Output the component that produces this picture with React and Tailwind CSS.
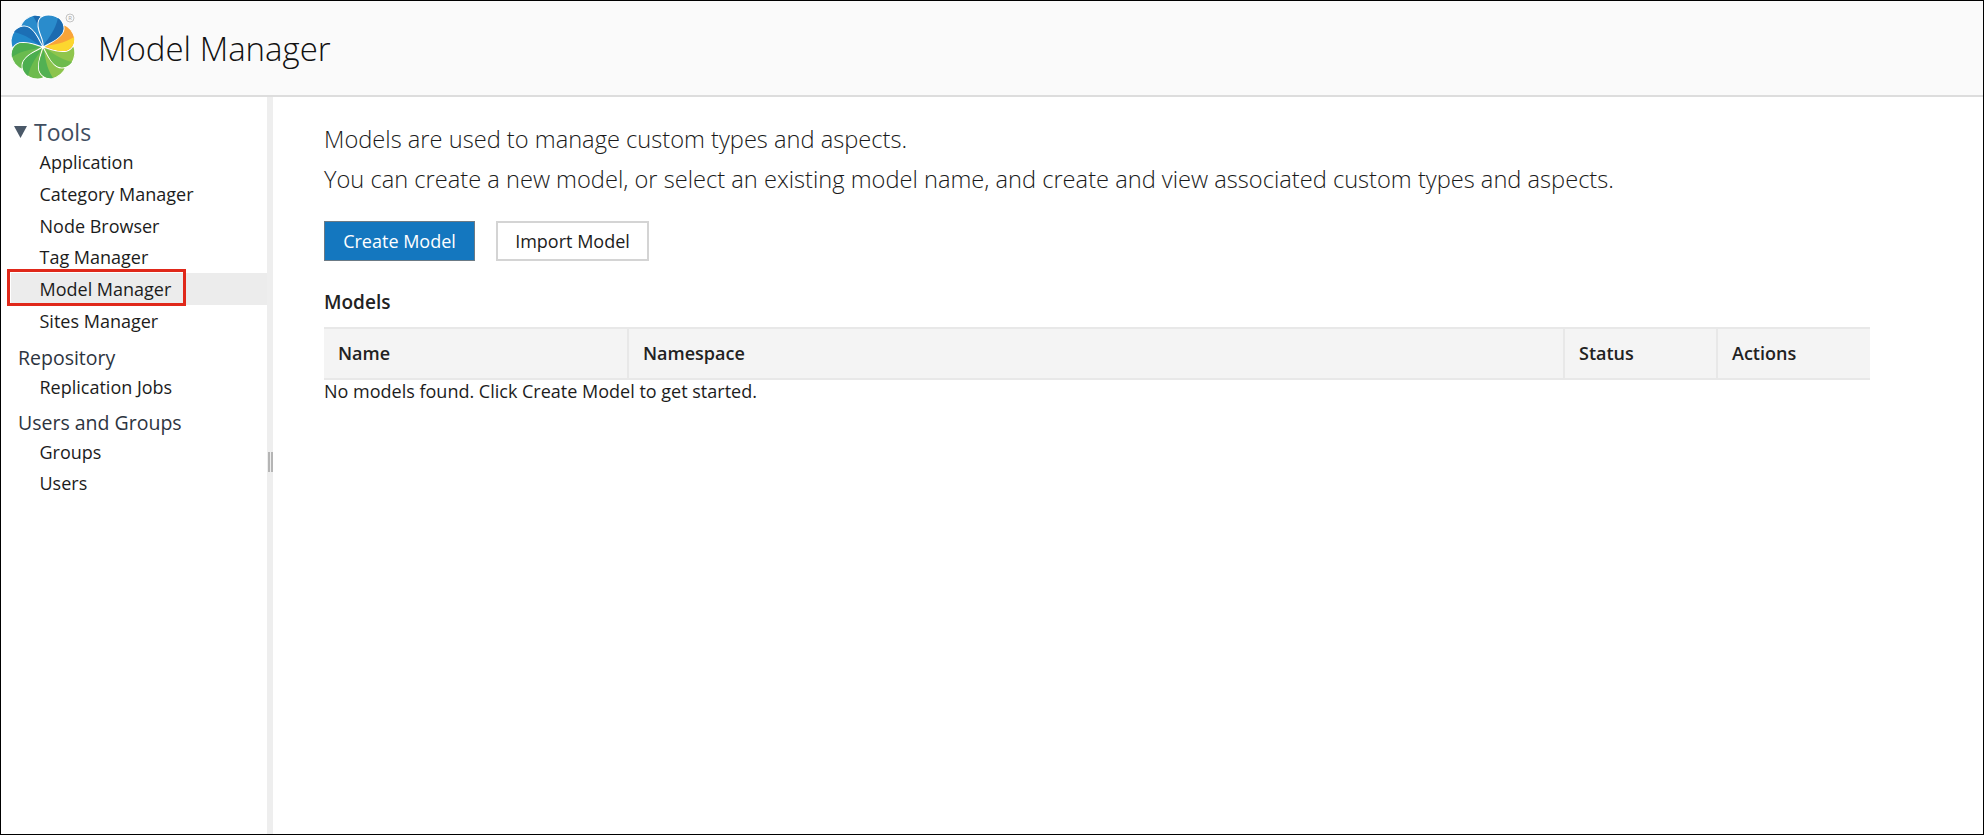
const petals = [
  { angle: 337, base: "#2a8ccc", dark: "#1c6bb0" },
  { angle: 292, base: "#2288ca", dark: "#1c6fb5" },
  { angle: 247, base: "#6abb4f", dark: "#4cae50" },
  { angle: 202, base: "#6dbb4d", dark: "#4cae50" },
  { angle: 157, base: "#8cc44c", dark: "#52b153" },
  { angle: 112, base: "#8fc54c", dark: "#6dbb4d" },
  { angle: 67, base: "#f9a438", dark: "#fcd72f" },
  { angle: 22, base: "#2a8ccc", dark: "#1c6bb0" },
];

function Logo() {
  return (
    <svg width="80" height="80" viewBox="-40 -40 80 80" className="shrink-0">
      <g transform="translate(-1 -1)">
        {petals.map((p) => (
          <g key={p.angle} transform={`rotate(${p.angle})`}>
            <path
              d="M0 0C-2 -9 -14 -13 -14 -23C-14 -29 -7 -33 0 -33C8 -33 14 -27 13 -20C11.500 -12 5 -6 0 0Z"
              fill={p.base}
              stroke="#fff"
              strokeWidth="1"
            />
            <path d="M0 -2C2 -11 5 -20 3 -32.500C9 -31 13 -26 12.500 -20C11 -12 4.500 -7 0 -2Z" fill={p.dark} />
          </g>
        ))}
      </g>
      <circle cx="26" cy="-30" r="4" fill="none" stroke="#b5b5b5" strokeWidth="0.800" />
      <text x="26" y="-27.800" textAnchor="middle" fontSize="6" fill="#a8a8a8">R</text>
    </svg>
  );
}

function NavItem({ label, active }) {
  if (active) {
    return (
      <div className="relative h-[31.800px] bg-[#ececec] ml-[10px] pl-[28.500px] leading-8 text-[18px] text-[#1c1c1c]">
        {label}
        <div className="absolute left-[-4px] top-[-4px] w-[179px] h-[37px] border-[3px] border-[#e0281a]" />
      </div>
    );
  }
  return <div className="h-[31.800px] pl-[38.500px] leading-8 text-[18px] text-[#1c1c1c]">{label}</div>;
}

function Sidebar() {
  const section = "h-[26px] pl-[17px] leading-[26px] text-[19.500px] text-[#2d3440]";
  return (
    <aside className="w-[266px] shrink-0 pt-[20px]">
      <div className="h-[29px] flex items-center pl-[13px] gap-[7px] text-[#3f4d60]">
        <svg width="13" height="12" viewBox="0 0 13 12">
          <path d="M0 0H13L6.500 12Z" fill="#4a5868" />
        </svg>
        <span className="text-[23px] leading-8">Tools</span>
      </div>
      <NavItem label="Application" />
      <NavItem label="Category Manager" />
      <NavItem label="Node Browser" />
      <NavItem label="Tag Manager" />
      <NavItem label="Model Manager" active />
      <NavItem label="Sites Manager" />
      <div className={`mt-[8px] ${section}`}>Repository</div>
      <NavItem label="Replication Jobs" />
      <div className={`mt-[7px] ${section}`}>Users and Groups</div>
      <NavItem label="Groups" />
      <NavItem label="Users" />
    </aside>
  );
}

function Splitter() {
  return (
    <div className="w-[6px] shrink-0 bg-[#eeeeee] flex items-center justify-center gap-[1px] pb-[8px]">
      <div className="w-[2px] h-[20px] bg-[#b5b5b5]" />
      <div className="w-[2px] h-[20px] bg-[#b5b5b5]" />
    </div>
  );
}

function ModelsTable() {
  const th = "h-[51px] px-[14px] text-left text-[18px] font-semibold text-[#222] bg-[#f4f4f4]";
  return (
    <table className="w-[1546px] table-fixed border-collapse border-y-2 border-[#e8e8e8]">
      <thead>
        <tr>
          <th className={`${th} w-[304px] border-r-2 border-[#e8e8e8]`}>Name</th>
          <th className={`${th} w-[936px] border-r-2 border-[#e8e8e8]`}>Namespace</th>
          <th className={`${th} w-[153px] border-r-2 border-[#e8e8e8]`}>Status</th>
          <th className={th}>Actions</th>
        </tr>
      </thead>
    </table>
  );
}

export default function App() {
  return (
    <div className="h-[835px] flex flex-col border border-black bg-white font-['Open_Sans',sans-serif] overflow-hidden">
      <header className="h-[96px] shrink-0 flex items-center pl-[3px] gap-[14px] bg-[#fafafa] border-b-2 border-[#dddddd]">
        <Logo />
        <h1 className="text-[33px] font-light text-[#111] leading-none">Model Manager</h1>
      </header>
      <div className="flex-1 flex min-h-0">
        <Sidebar />
        <Splitter />
        <main className="flex-1 pl-[51px] pt-[25px]">
          <p className="text-[23.650px] font-light leading-[34px] text-[#1a1a1a]">Models are used to manage custom types and aspects.</p>
          <p className="mt-[6px] text-[23.650px] font-light leading-[34px] text-[#1a1a1a]">
            You can create a new model, or select an existing model name, and create and view associated custom types and aspects.
          </p>
          <div className="mt-[25px] flex gap-[21px]">
            <button className="w-[151px] h-[40px] bg-[#1477bf] border border-[#6b7a85] text-white text-[18px]">Create Model</button>
            <button className="w-[153px] h-[40px] bg-white border-2 border-[#d4d4d4] text-[#1c1c1c] text-[18px]">Import Model</button>
          </div>
          <h2 className="mt-[27px] text-[19px] font-semibold leading-[28px] text-[#222]">Models</h2>
          <div className="mt-[11px]">
            <ModelsTable />
          </div>
          <p className="text-[18px] leading-[22px] text-[#1c1c1c]">No models found. Click Create Model to get started.</p>
        </main>
      </div>
    </div>
  );
}
